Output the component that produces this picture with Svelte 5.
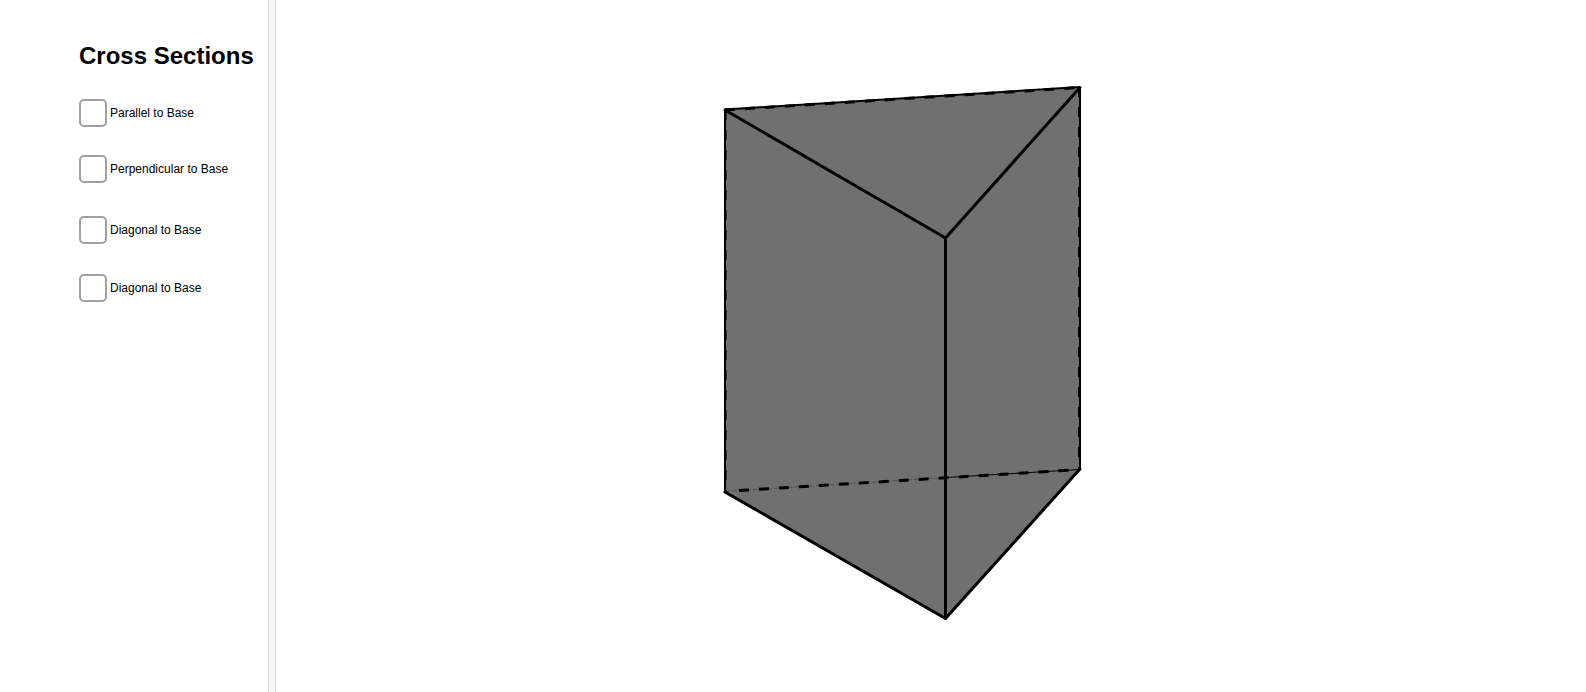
<script lang="ts">
    let sections = $state([
        { id: 'parallel', label: 'Parallel to Base', checked: false },
        { id: 'perpendicular', label: 'Perpendicular to Base', checked: false },
        { id: 'diagonal-a', label: 'Diagonal to Base', checked: false },
        { id: 'diagonal-b', label: 'Diagonal to Base', checked: false }
    ])
</script>

<div class="app">
    <aside class="panel">
        <h1>Cross Sections</h1>
        {#each sections as section}
            <div class="option {section.id}">
                <input type="checkbox" id={section.id} bind:checked={section.checked}>
                <label for={section.id}>{section.label}</label>
            </div>
        {/each}
    </aside>

    <div class="divider"></div>

    <main class="view">
        <svg viewBox="0 0 1310 692" role="img" aria-label="Triangular prism">
            <polygon class="solid" points="449,110 804,87.5 804,469 669.5,618.5 449,492" />

            <!-- back edges -->
            <path class="side" d="M449 109.5L804 87" />
            <path class="thin" d="M670 477.5L804 469.5" />
            <path class="faint" d="M449 491.5L670 477.5" />
            <path class="dashed" d="M463 490.5L804 469.5" />
            <path class="dashed" d="M449 110L804 87.5M803.5 87V469" />
            <path class="inner" d="M450.5 110V492" />
            <path class="side" d="M449 110V492M804 87V469" />

            <!-- front edges -->
            <path class="edge" d="M449 110L669.5 238L804 87.5" />
            <path class="edge" d="M669.5 238V618.5" />
            <path class="edge" d="M449 492L669.5 618.5L804 469" />
        </svg>
    </main>
</div>

<style>
    :global(body){
        background: white;
    }

    .app{
        display: flex;
        min-height: 100vh;
        font-family: Arial, "Liberation Sans", sans-serif;
        color: black;
    }

    .panel{
        box-sizing: border-box;
        flex: 0 0 268px;
        padding: 40px 0 0 79px;
    }

    h1{
        margin: 0 0 27px;
        font-size: 24px;
        line-height: 32px;
        white-space: nowrap;
    }

    .option{
        display: flex;
        align-items: center;
        gap: 3px;
        margin-bottom: 30px;
    }

    .option.parallel{
        margin-bottom: 28px;
    }

    .option.perpendicular{
        margin-bottom: 33px;
    }

    .option input{
        appearance: none;
        box-sizing: border-box;
        width: 28px;
        height: 28px;
        margin: 0;
        border: 2px solid #a0a0a0;
        border-radius: 5px;
        background: white;
    }

    .option input:checked{
        background: #707070;
    }

    label{
        font-size: 12px;
        line-height: 16px;
    }

    .divider{
        box-sizing: border-box;
        flex: 0 0 8px;
        border: solid #dadada;
        border-width: 0 1px;
        background: #f7f7f7;
    }

    .view{
        flex: 1;
        min-width: 0;
    }

    svg{
        display: block;
        width: 100%;
        height: auto;
    }

    .solid{
        fill: #707070;
    }

    path{
        fill: none;
        stroke: black;
        stroke-linecap: butt;
        stroke-linejoin: round;
    }

    .edge{
        stroke-width: 3;
        stroke-linecap: round;
    }

    .side{
        stroke-width: 2;
    }

    .thin{
        stroke-width: 1;
    }

    .inner{
        stroke: #303030;
        stroke-width: 1;
        stroke-dasharray: 10 10;
    }

    .faint{
        stroke: #505050;
        stroke-width: 1;
        stroke-dasharray: 5 2;
    }

    .dashed{
        stroke-width: 3;
        stroke-dasharray: 10 10;
    }
</style>
